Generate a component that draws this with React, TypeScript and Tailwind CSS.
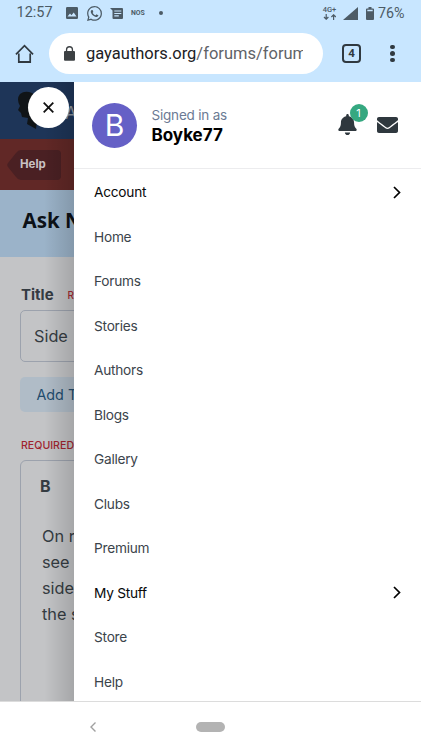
import React from "react";

const entries = [
  { label: "Account", sub: true },
  { label: "Home" },
  { label: "Forums" },
  { label: "Stories" },
  { label: "Authors" },
  { label: "Blogs" },
  { label: "Gallery" },
  { label: "Clubs" },
  { label: "Premium" },
  { label: "My Stuff", sub: true },
  { label: "Store" },
  { label: "Help" },
];

function StatusBar() {
  return (
    <div className="flex h-[26px] items-center pr-[16px] pl-[16.5px] text-[#4c5b66]">
      <span className="w-[48.5px] text-[14.5px] leading-[26px]">12:57</span>
      <svg className="ml-[1px]" width="12" height="12" viewBox="0 0 12 12" fill="currentColor">
        <path fillRule="evenodd" d="M1.2 0H10.8Q12 0 12 1.2V10.8Q12 12 10.8 12H1.2Q0 12 0 10.8V1.2Q0 0 1.2 0ZM1.5 9.5H10.5L7.7 5.6L5.5 8.3L4 6.5Z" />
      </svg>
      <svg className="ml-[9px]" width="15" height="15" viewBox="0 0 24 24" fill="currentColor">
        <path d="M17.472 14.382c-.297-.149-1.758-.867-2.03-.967-.273-.099-.471-.148-.67.15-.197.297-.767.966-.94 1.164-.173.199-.347.223-.644.075-.297-.15-1.255-.463-2.39-1.475-.883-.788-1.48-1.761-1.653-2.059-.173-.297-.018-.458.13-.606.134-.133.298-.347.446-.52.149-.174.198-.298.298-.497.099-.198.05-.371-.025-.52-.075-.149-.669-1.612-.916-2.207-.242-.579-.487-.5-.669-.51-.173-.008-.371-.01-.57-.01-.198 0-.52.074-.792.372-.272.297-1.04 1.016-1.04 2.479 0 1.462 1.065 2.875 1.213 3.074.149.198 2.096 3.2 5.077 4.487.709.306 1.262.489 1.694.625.712.227 1.36.195 1.871.118.571-.085 1.758-.719 2.006-1.413.248-.694.248-1.289.173-1.413-.074-.124-.272-.198-.57-.347m-5.421 7.403h-.004a9.87 9.87 0 01-5.031-1.378l-.361-.214-3.741.982.998-3.648-.235-.374a9.86 9.86 0 01-1.51-5.26c.001-5.45 4.436-9.884 9.888-9.884 2.64 0 5.122 1.03 6.988 2.898a9.825 9.825 0 012.893 6.994c-.003 5.45-4.437 9.884-9.885 9.884m8.413-18.297A11.815 11.815 0 0012.05 0C5.495 0 .16 5.335.157 11.892c0 2.096.547 4.142 1.588 5.945L.057 24l6.305-1.654a11.882 11.882 0 005.683 1.448h.005c6.554 0 11.89-5.335 11.893-11.893a11.821 11.821 0 00-3.48-8.413Z" />
      </svg>
      <svg className="ml-[8px]" width="13" height="11" viewBox="0 0 13 11" fill="currentColor">
        <path fillRule="evenodd" d="M0 0H12Q13 0 13 1V10Q13 11 12 11H3.5Q2.5 11 2.5 10V2.5ZM4.3 2.5V3.6H11.3V2.5ZM4.3 4.9V6H11.3V4.9ZM4.3 7.3V8.4H8.8V7.3Z" />
      </svg>
      <span className="ml-[8px] w-[16px] text-[6.9px] font-bold">NOS</span>
      <span className="ml-[12px] size-[4px] rounded-full bg-current" />
      <div className="ml-auto flex items-center">
        <div className="flex w-[15px] flex-col items-center">
          <span className="text-[7.5px] leading-[7px] font-medium">4G+</span>
          <svg className="mt-px" width="13" height="6" viewBox="0 0 13 6" fill="none" stroke="currentColor" strokeWidth="1.2">
            <path d="M3.2 0V5M1 3L3.2 5.2L5.4 3M10.6 6V1M8.4 3L10.6 .8L12.8 3" />
          </svg>
        </div>
        <svg className="ml-[6px]" width="15" height="13" viewBox="0 0 15 14" preserveAspectRatio="none" fill="currentColor"><path d="M15 0V14H0Z" /></svg>
        <svg className="ml-[8px]" width="8" height="13" viewBox="0 0 8 14" preserveAspectRatio="none" fill="currentColor">
          <path fillRule="evenodd" d="M2.5 0H5.5V1.5H7Q8 1.5 8 2.5V13Q8 14 7 14H1Q0 14 0 13V2.5Q0 1.5 1 1.5H2.5ZM1.3 3V4.5H6.7V3Z" />
        </svg>
        <span className="ml-[4px] w-[27px] text-[14.3px] leading-[26px] whitespace-nowrap">76%</span>
      </div>
    </div>
  );
}

function Toolbar() {
  return (
    <div className="flex h-[56px] items-center pb-px">
      <svg className="ml-[15px]" width="19" height="20" viewBox="0 0 20 20" preserveAspectRatio="none" fill="none" stroke="#303940" strokeWidth="1.8">
        <path d="M4 9.5V18H16V9.5M1 10.3L10 1.7L19 10.3" />
      </svg>
      <div className="ml-[15px] flex h-[41px] w-[274px] items-center rounded-full bg-white pl-[15px]">
        <svg width="11" height="15" viewBox="0 0 11 15" fill="#3c4043">
          <path fillRule="evenodd" d="M1.9 5V3.7A3.6 3.6 0 0 1 9.1 3.7V5H10Q11 5 11 6V13.7Q11 14.7 10 14.7H1Q0 14.7 0 13.7V6Q0 5 1 5ZM3.2 5H7.8V3.7A2.3 2.3 0 0 0 3.2 3.7Z" />
        </svg>
        <div className="ml-[11px] w-[217px] overflow-hidden pt-px text-[16.5px] leading-[24px] whitespace-nowrap text-[#5f6368]">
          <span className="text-[#202124]">gayauthors.org</span>/forums/forum
        </div>
      </div>
      <div className="ml-[19px] flex size-[19px] items-center justify-center rounded-[4px] border-2 border-[#303940] text-[11.5px] font-bold text-[#303940]">4</div>
      <div className="ml-[29px] flex flex-col gap-[2px]">
        <i className="size-[4.5px] rounded-full bg-[#303940]" />
        <i className="size-[4.5px] rounded-full bg-[#303940]" />
        <i className="size-[4.5px] rounded-full bg-[#303940]" />
      </div>
    </div>
  );
}

function ForumPage() {
  return (
    <div className="flex h-full w-[74px] flex-col overflow-hidden bg-[#c3c4c6] whitespace-nowrap">
      <div className="flex h-[57px] shrink-0 items-center bg-[#1e3558]">
        <svg className="ml-[17px] shrink-0" width="24" height="40" viewBox="0 0 24 40" fill="#101417">
          <path d="M3 3Q8-1 15 2Q22 5 22 15L20 29L19 38L10 33L11 27L5 26L4 22L1 19L3 15Q-1 8 3 3Z" />
        </svg>
        <span className="ml-[24px] pt-[7px] text-[17px] text-[#8f969f]">A</span>
      </div>
      <div className="flex h-[51px] shrink-0 items-center bg-[#612826]">
        <div className="relative ml-[7px] flex h-[30px] w-[54px] items-center pl-[13px]">
          <svg className="absolute inset-0" width="54" height="30" viewBox="0 0 54 30" fill="#4a2023">
            <path d="M14 0H50Q54 0 54 4V26Q54 30 50 30H14Q11 30 9 27L1 17Q-.5 15 1 13L9 3Q11 0 14 0Z" />
          </svg>
          <span className="relative text-[11.5px] font-bold text-[#c9c3c3]">Help</span>
        </div>
      </div>
      <div className="flex h-[67px] shrink-0 items-center bg-[#9bb3c9] pb-[6px] pl-[22.5px] font-['Noto_Sans',sans-serif] text-[20.5px] font-bold text-[#0c1117]">Ask N</div>
      <div className="flex h-[53px] shrink-0 items-center pt-[23px] pl-[21px]">
        <span className="w-[33px] text-[15px] font-bold text-[#343b42]">Title</span>
        <span className="ml-[13.5px] pt-px text-[10px] font-medium text-[#a32a32]">R</span>
      </div>
      <div className="ml-[20px] flex h-[52px] w-[120px] shrink-0 items-center rounded-[5px] border border-[#9ca2ad] pl-[13px] text-[16.3px] text-[#353c42]">Side</div>
      <div className="mt-[15px] ml-[20px] flex h-[35px] w-[120px] shrink-0 items-center rounded-[5px] bg-[#b0bcc7] pl-[16.5px] text-[14.3px] text-[#224c6e]">Add T</div>
      <div className="mt-[26px] ml-[21px] h-[16px] shrink-0 text-[10.6px] leading-[16px] font-medium text-[#a02430]">REQUIRED</div>
      <div className="mt-[6px] ml-[20px] h-[260px] w-[180px] shrink-0 rounded-t-[6px] border border-[#9ca2ad] pl-[19px] text-[#353c42]">
        <div className="mt-[13px] text-[16px] leading-[24px] font-bold">B</div>
        <div className="mt-[25px] pl-[2px] text-[16.3px] leading-[26px]">
          <p>On r</p>
          <p>see</p>
          <p>side</p>
          <p>the s</p>
        </div>
      </div>
    </div>
  );
}

function Chevron() {
  return (
    <svg className="mb-px" width="8" height="13" viewBox="0 0 8 13" fill="none" stroke="#000" strokeWidth="1.7">
      <path d="M1 1L6.5 6.5L1 12" />
    </svg>
  );
}

function Drawer() {
  return (
    <div className="absolute inset-y-0 right-0 left-[74px] overflow-hidden bg-white">
      <div className="flex h-[87px] items-center border-b border-[#ececee] pl-[18px]">
        <div className="flex size-[45px] items-center justify-center rounded-full bg-[#6560c6] text-[30px] text-white">B</div>
        <div className="ml-[14.5px] w-[185.5px]">
          <div className="text-[13.5px] leading-[20px] tracking-[-0.2px] text-[#6b7a94]">Signed in as</div>
          <div className="text-[17px] leading-[21px] font-bold text-black">Boyke77</div>
        </div>
        <div className="relative h-[24px] w-[20px]">
          <svg className="absolute top-px left-[.5px]" width="19" height="21" viewBox="0 0 448 512" fill="#2f383e">
            <path d="M224 512c35.32 0 63.97-28.65 63.97-64H160.03c0 35.35 28.65 64 63.97 64zm215.39-149.71c-19.32-20.76-55.47-51.99-55.47-154.29 0-77.7-54.48-139.9-127.94-155.16V32c0-17.67-14.32-32-31.98-32s-31.98 14.33-31.98 32v20.84C118.56 68.1 64.08 130.3 64.08 208c0 102.3-36.15 133.53-55.47 154.29-6 6.45-8.66 14.16-8.61 21.71.11 16.4 12.98 32 32.1 32h383.8c19.12 0 32-15.6 32.1-32 .05-7.55-2.61-15.27-8.61-21.71z" />
          </svg>
          <span className="absolute -top-[9px] left-[12.5px] flex size-[18px] items-center justify-center rounded-full bg-[#35a880] text-[11px] text-white">1</span>
        </div>
        <svg className="ml-[19.5px]" width="21" height="16" viewBox="0 64 512 384" preserveAspectRatio="none" fill="#2f383e">
          <path d="M502.3 190.8c3.9-3.1 9.7-.2 9.7 4.7V400c0 26.5-21.5 48-48 48H48c-26.5 0-48-21.5-48-48V195.6c0-5 5.7-7.8 9.7-4.7 22.4 17.4 52.1 39.5 154.1 113.6 21.1 15.4 56.7 47.8 92.2 47.6 35.7.3 72-32.8 92.3-47.6 102-74.1 131.6-96.3 154-113.7zM256 320c23.2.4 56.6-29.2 73.4-41.4 132.7-96.3 142.8-104.7 173.4-128.7 5.8-4.5 9.2-11.5 9.2-18.9v-19c0-26.5-21.5-48-48-48H48c-26.5 0-48 21.5-48 48v19c0 7.4 3.4 14.3 9.2 18.9 30.6 23.9 40.7 32.4 173.4 128.7 16.8 12.2 50.2 41.8 73.4 41.4z" />
        </svg>
      </div>
      <nav className="pt-[1.3px]">
        {entries.map((e) => (
          <div
            key={e.label}
            className={`flex h-[44.5px] items-center justify-between pr-[20px] pl-[20px] text-[13.7px] tracking-[-0.25px] ${e.sub ? "text-[#08090a]" : "text-[#3b444b]"}`}
          >
            <span>{e.label}</span>
            {e.sub && <Chevron />}
          </div>
        ))}
      </nav>
    </div>
  );
}

export default function App() {
  return (
    <div className="flex h-[750px] w-[421px] flex-col overflow-hidden bg-white font-['Inter',sans-serif]">
      <header className="h-[82px] shrink-0 bg-[#c8e6ff] font-['Roboto',sans-serif]">
        <StatusBar />
        <Toolbar />
      </header>
      <main className="relative h-[619px] shrink-0 overflow-hidden">
        <ForumPage />
        <div className="absolute inset-y-0 left-[44px] w-[30px] bg-linear-to-r from-transparent to-black/15" />
        <Drawer />
        <button className="absolute top-[5px] left-[28px] flex size-[41px] items-center justify-center rounded-full bg-white">
          <svg width="11" height="11" viewBox="0 0 11 11" stroke="#111" strokeWidth="1.8">
            <path d="M.7 .7L10.3 10.3M10.3 .7L.7 10.3" />
          </svg>
        </button>
      </main>
      <footer className="flex h-[49px] shrink-0 items-center border-t border-[#dcdcdc] pt-px">
        <svg className="ml-[90px]" width="6" height="10" viewBox="0 0 6 10" fill="none" stroke="#a0a0a0" strokeWidth="1.4"><path d="M5.5 .5L1 5L5.5 9.5" /></svg>
        <div className="ml-[100px] h-[10px] w-[29px] rounded-full bg-[#b3b3b3]" />
      </footer>
    </div>
  );
}
